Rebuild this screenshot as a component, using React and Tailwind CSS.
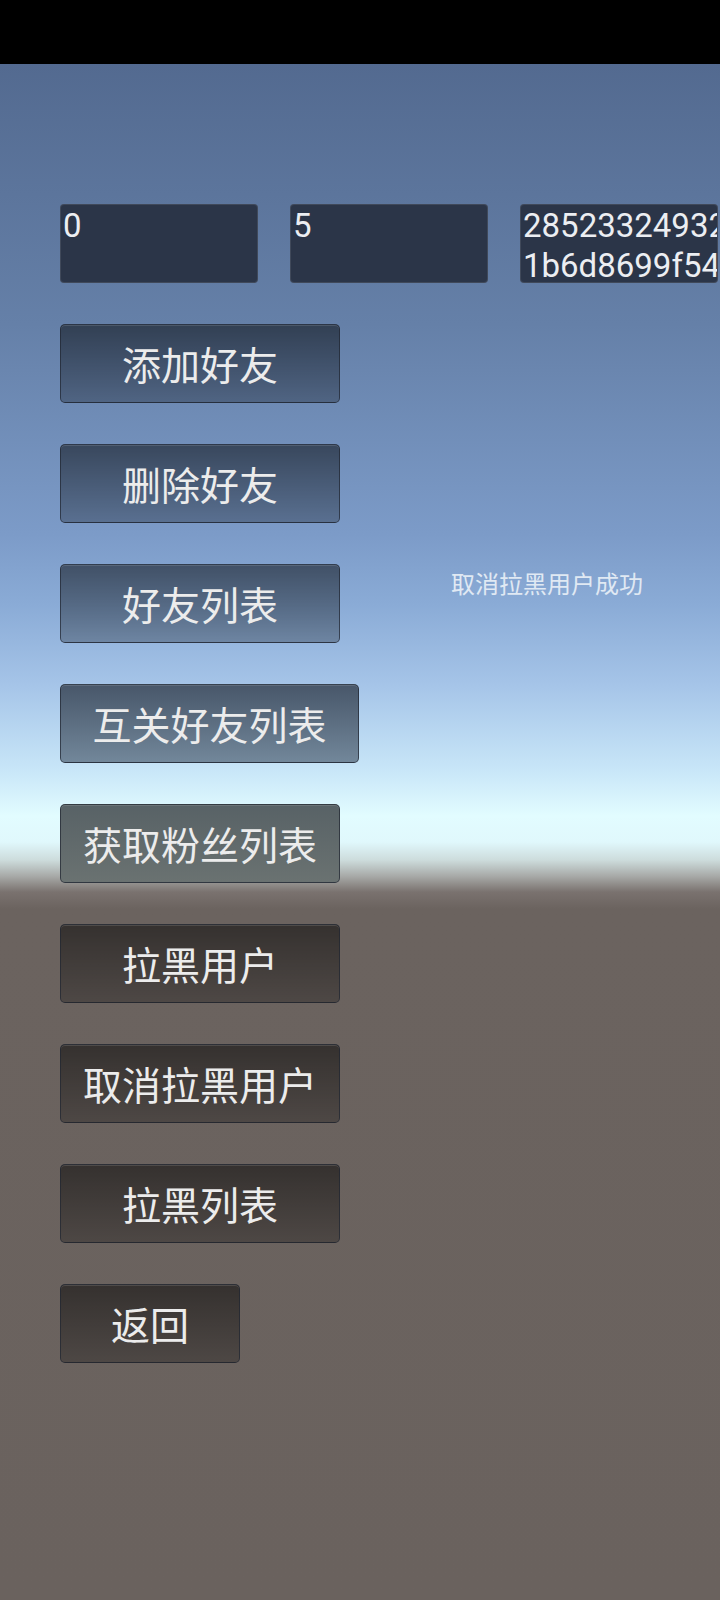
import React from 'react';

const overlay = 'bg-linear-to-b from-black/50 to-black/27';

const buttons = [
  { label: '添加好友', w: 'w-[280px]', bg: overlay },
  { label: '删除好友', w: 'w-[280px]', bg: overlay },
  { label: '好友列表', w: 'w-[280px]', bg: overlay, note: '取消拉黑用户成功' },
  { label: '互关好友列表', w: 'w-[299px]', bg: 'bg-linear-to-b from-[#48576a] to-[#72879a]' },
  { label: '获取粉丝列表', w: 'w-[280px]', bg: 'bg-linear-to-b from-[#586266] to-[#6a7271]' },
  { label: '拉黑用户', w: 'w-[280px]', bg: overlay },
  { label: '取消拉黑用户', w: 'w-[280px]', bg: overlay },
  { label: '拉黑列表', w: 'w-[280px]', bg: overlay },
  { label: '返回', w: 'w-[180px]', bg: overlay },
];

function Field({ lines }) {
  return (
    <div className="w-[198px] h-[79px] shrink-0 overflow-hidden rounded-[4px] border border-white/10 bg-[#2b3548] pl-[2px] pt-[1px] font-['Roboto','Liberation_Sans',sans-serif] text-[33px] leading-[40px] text-[#eceef2]">
      {lines.map((l, i) => (
        <div key={i} className="whitespace-nowrap">{l}</div>
      ))}
    </div>
  );
}

export default function App() {
  return (
    <div className="w-[720px] h-[1600px] flex flex-col bg-black">
      <div className="h-[64px] shrink-0 bg-black" />
      <div className="flex-1 pl-[60px] pt-[140px] bg-[linear-gradient(to_bottom,#536a90_0px,#6580a8_260px,#7c9bc8_470px,#8aabd6_540px,#a5c4e8_620px,#c8e6f8_706px,#e2fcff_752px,#e0f8fc_778px,#cddcdc_796px,#a8aaa8_812px,#7a726f_828px,#6b635f_845px,#6a625e_1536px)]">
        {/* 输入框 */}
        <div className="flex gap-[32px] w-[660px] overflow-hidden">
          <Field lines={['0']} />
          <Field lines={['5']} />
          <Field lines={['285233249325', '1b6d8699f54e']} />
        </div>

        {/* 按钮 */}
        <div className="mt-[41px] flex flex-col gap-[41px]">
          {buttons.map((b) => (
            <div key={b.label} className="flex items-start">
              <button
                className={`${b.w} ${b.bg} h-[79px] shrink-0 rounded-[5px] border border-[#1f2530]/70 shadow-[inset_0_1px_0_rgba(255,255,255,0.12)] font-['Noto_Sans_CJK_SC',sans-serif] text-[39px] leading-none text-[#ececec]`}
              >
                {b.label}
              </button>
              {b.note && (
                <p className="ml-[111px] mt-[3px] font-['Noto_Sans_CJK_SC',sans-serif] text-[24px] leading-[32px] text-[#e0e9f3]">
                  {b.note}
                </p>
              )}
            </div>
          ))}
        </div>
      </div>
    </div>
  );
}
